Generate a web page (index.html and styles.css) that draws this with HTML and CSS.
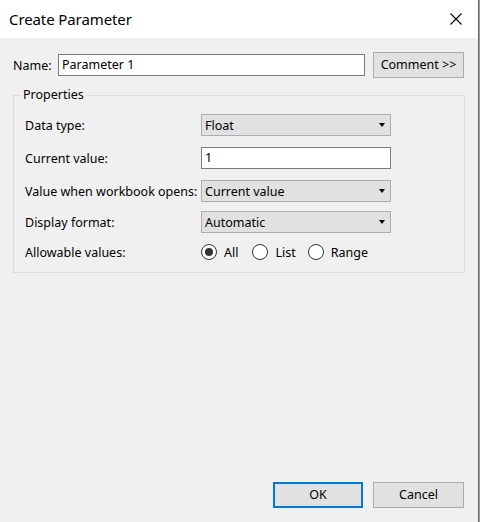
FILE: index.html
```html
<!DOCTYPE html>
<html>
<head>
<meta charset="utf-8">
<link rel="stylesheet" href="styles.css">
</head>
<body>
<div class="screen">
  <div class="dialog">
    <div class="titlebar">
      <span class="title">Create Parameter</span>
      <svg class="close" width="12" height="12" viewBox="0 0 12 12"><path d="M0.5 0.5 L11.5 11.5 M11.5 0.5 L0.5 11.5" stroke="#000" stroke-width="1.1" fill="none"/></svg>
    </div>
    <div class="body">
      <div class="name-row">
        <span class="name-label">Name:</span>
        <div class="textbox name-box">Parameter 1</div>
        <div class="button comment">Comment &gt;&gt;</div>
      </div>
      <fieldset class="group">
        <legend class="legend">Properties</legend>
        <div class="grid">
          <div class="label r1">Data type:</div>
          <div class="combo r1"><span>Float</span><span class="arrow"></span></div>
          <div class="label r2">Current value:</div>
          <div class="textbox r2 value-box">1</div>
          <div class="label r3">Value when workbook opens:</div>
          <div class="combo r3"><span>Current value</span><span class="arrow"></span></div>
          <div class="label r4">Display format:</div>
          <div class="combo r4"><span>Automatic</span><span class="arrow"></span></div>
          <div class="label r5">Allowable values:</div>
          <div class="radios r5">
            <span class="radio checked"></span><span class="rtext all">All</span>
            <span class="radio"></span><span class="rtext list">List</span>
            <span class="radio"></span><span class="rtext">Range</span>
          </div>
        </div>
      </fieldset>
      <div class="spacer"></div>
      <div class="buttons">
        <div class="button ok">OK</div>
        <div class="button cancel">Cancel</div>
      </div>
    </div>
  </div>
  <div class="edge"></div>
</div>
</body>
</html>
```
FILE: styles.css
```css
html, body {
  margin: 0;
  padding: 0;
}
body {
  width: 480px;
  height: 522px;
  overflow: hidden;
  background: #f0f0f0;
  font-family: "Noto Sans", "DejaVu Sans", sans-serif;
  font-size: 12.5px;
  color: #000;
}
.screen {
  display: flex;
  width: 480px;
  height: 522px;
}
.dialog {
  width: 478px;
  height: 522px;
  display: flex;
  flex-direction: column;
  background: #f0f0f0;
}
.edge {
  width: 2px;
  height: 522px;
  background: linear-gradient(to right, #6e6e6e 0 1px, #9a9a9a 1px 2px);
}
.titlebar {
  height: 38px;
  background: #fff;
  display: flex;
  align-items: center;
  justify-content: space-between;
  padding: 0 16px 0 9px;
}
.title {
  font-size: 15px;
  letter-spacing: -0.1px;
}
.close {
  display: block;
}
.body {
  flex: 1;
  display: flex;
  flex-direction: column;
  padding: 14px 14px 14px 13px;
}
.name-row {
  display: flex;
  align-items: center;
  height: 26px;
}
.name-label {
  width: 45px;
  white-space: nowrap;
}
.textbox {
  background: #fff;
  border: 1px solid #7a7a7a;
  height: 20px;
  line-height: 20px;
  padding: 0 3px;
  box-sizing: content-box;
}
.name-box {
  width: 299px;
}
.button {
  background: #e1e1e1;
  border: 1px solid #adadad;
  height: 24px;
  line-height: 24px;
  text-align: center;
  white-space: nowrap;
}
.comment {
  width: 89px;
  margin-left: 8px;
}
.group {
  margin: 8px -1px 0 0;
  padding: 0 11px 9px 11px;
  border: 1px solid #dcdcdc;
  min-width: 0;
}
.legend {
  padding: 0 2px;
  margin-left: -4px;
  line-height: 18px;
}
.grid {
  display: grid;
  grid-template-columns: 176px 190px;
  padding-top: 10px;
}
.label {
  display: flex;
  align-items: center;
  height: 22px;
  white-space: nowrap;
}
.r2 { margin-top: 11px; }
.r3 { margin-top: 11px; }
.r4 { margin-top: 9px; }
.r5 { margin-top: 8px; }
.combo {
  height: 20px;
  background: #e1e1e1;
  border: 1px solid #adadad;
  display: flex;
  align-items: center;
  justify-content: space-between;
  padding: 0 5px 0 3px;
}
.value-box {
  padding: 0 3px;
  width: 182px;
}
.arrow {
  width: 0;
  height: 0;
  border-left: 3.5px solid transparent;
  border-right: 3.5px solid transparent;
  border-top: 4px solid #000;
}
.radios {
  display: flex;
  align-items: center;
  height: 22px;
}
.radio {
  width: 14px;
  height: 14px;
  border: 1px solid #333;
  border-radius: 50%;
  background: #fff;
  display: flex;
  align-items: center;
  justify-content: center;
  box-sizing: content-box;
}
.radio.checked::after {
  content: "";
  width: 8px;
  height: 8px;
  border-radius: 50%;
  background: #333;
}
.rtext {
  margin-left: 7px;
}
.rtext.all { margin-right: 14px; }
.rtext.list { margin-right: 12px; }
.spacer {
  flex: 1;
}
.buttons {
  display: flex;
  justify-content: flex-end;
  gap: 10px;
}
.ok {
  width: 86px;
  border: 2px solid #0078d7;
  height: 22px;
  line-height: 22px;
}
.cancel {
  width: 89px;
}
```
